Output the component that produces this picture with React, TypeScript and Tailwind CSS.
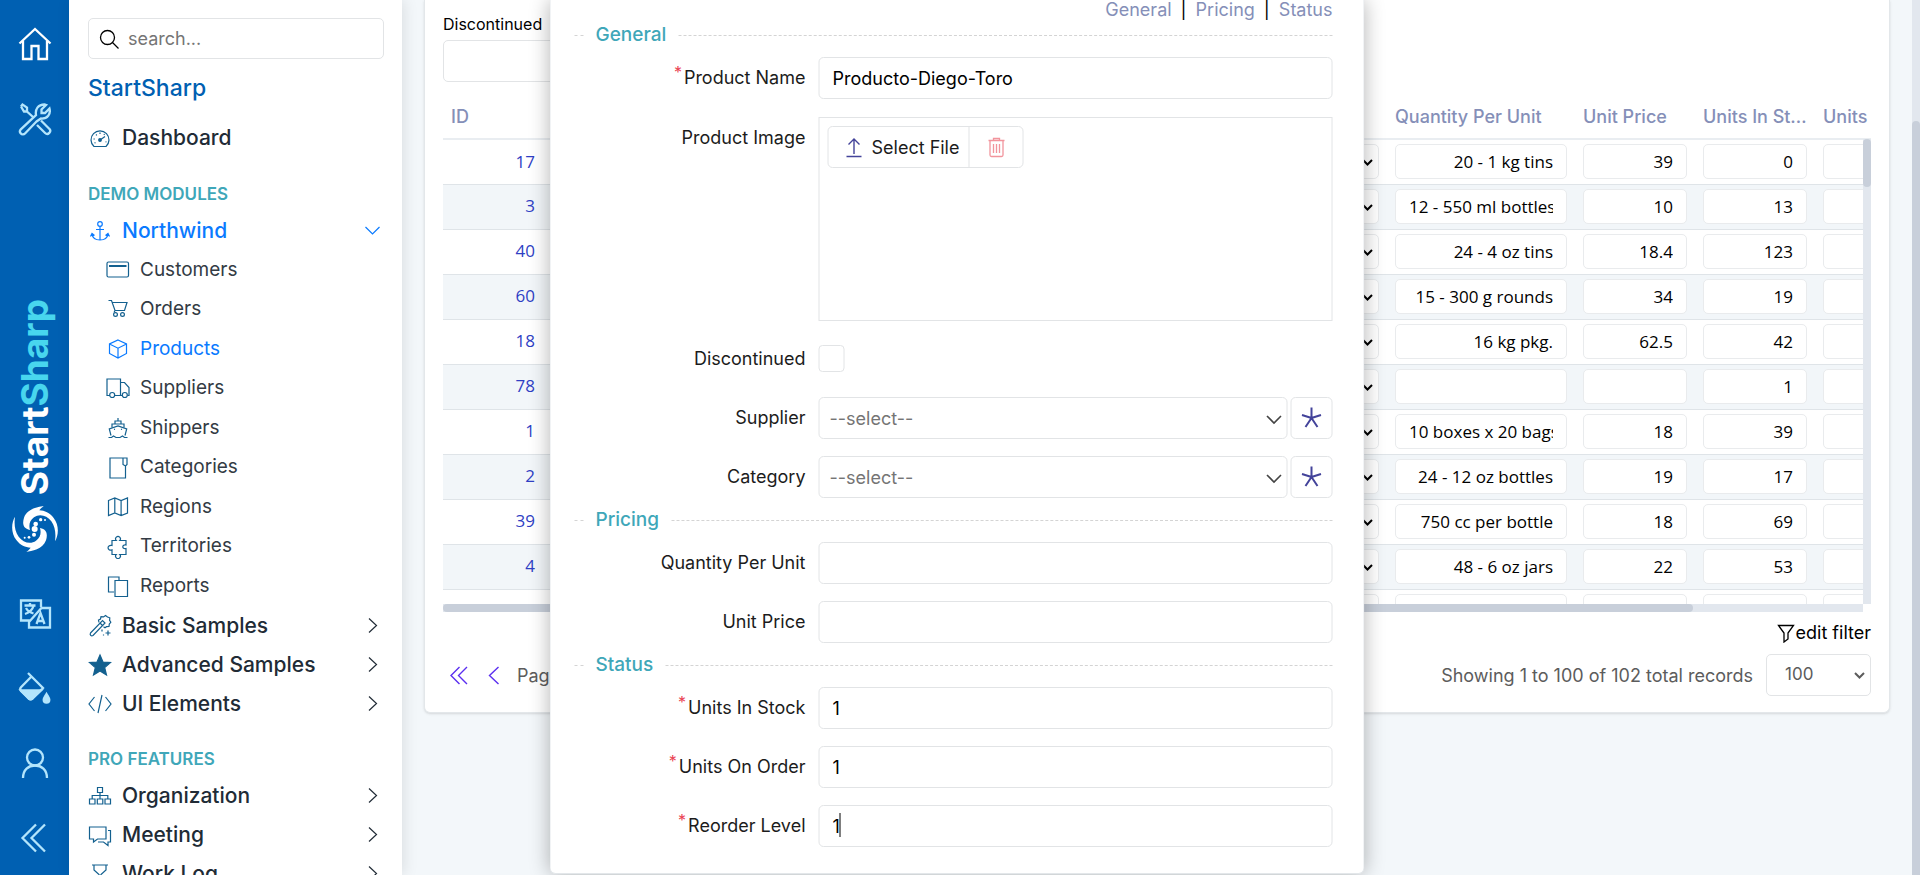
import { useId, type ReactNode } from "react";

const iconShapes: Record<string, ReactNode> = {
  home: (
    <>
      <path d="M1.500 16.500 17 2l15.500 14.500" />
      <path d="M5 14v18h8.500V19h7v13H29V14" />
    </>
  ),
  tools: (
    <>
      <path d="M3 4.500 4.500 2.500l4.500 3v4l6 5.500M3 4.500l3 5h3" />
      <path d="m18.500 19.500-11.500 12a2.900 2.900 0 0 1-4.200-.1 2.900 2.900 0 0 1 0-4L18 13c-1-5.500 2-10.500 8.500-10.500l1.500.5-4.500 4.500v3.500h3.500L31.500 6.500c1.500 5.500-2 10.500-8.500 10z" />
      <path d="m23 18.500 8.200 8.200a2.900 2.900 0 0 1-4.100 4.300L19 23" />
    </>
  ),
  translate: (
    <>
      <path d="M23 11V4.500H3v20h8v7h21V12h-8.500L11 26" />
      <path d="M6.500 9.500h11M12 7v2.500M15.500 10c-1 3.500-4 6.500-8.500 8M8 12c1.500 2.800 4 4.500 7.500 5.500" />
      <path d="m18.500 28 4-11 4 11M20.500 25h4" />
    </>
  ),
  bucket: (
    <>
      <path d="m10 2 15 15-10.500 10.500c-1.200 1-2.600 1-3.800 0L3 20c-1-1.200-1-2.600 0-3.800L13 6" />
      <path d="M3 19.500h20l-8.500 8c-1.200 1-2.600 1-3.800 0z" fill="currentColor" />
      <path d="M28.500 23c-1.800 3-2.800 4.200-2.800 5.800a2.800 2.800 0 0 0 5.600 0c0-1.600-1-2.800-2.800-5.800z" fill="currentColor" />
    </>
  ),
  user: (
    <>
      <circle cx="17" cy="11.500" r="8" />
      <path d="M5 32c0-8.500 5.500-12.500 12-12.500S29 23.500 29 32" />
    </>
  ),
  collapse: <path d="M18 3.500 4.500 17 18 30.500M27 3.500 13.500 17 27 30.500" />,
  search: (
    <>
      <circle cx="8.500" cy="8.500" r="7" />
      <path d="m13.500 13.500 6 6" />
    </>
  ),
  dashboard: (
    <>
      <path d="M6 20.500a9 9 0 1 1 12 0z" />
      <path d="m12 14 5-3.500" />
      <circle cx="12" cy="14" r="1.300" fill="currentColor" />
      <path d="M12 6.500V8M8 8.500l.8.8M5.500 13h1.300M6.500 17l1-.4M16.500 8l-.6.9M18.500 16l-1-.3" />
    </>
  ),
  anchor: (
    <>
      <circle cx="12" cy="5" r="2.300" />
      <path d="M12 7.500v13.500M8 10.500h8M4 15c.5 4 3.500 6 8 6s7.500-2 8-6M2.500 17.500l1.500-3 2.500 2M21.500 17.500l-1.500-3-2.500 2" />
    </>
  ),
  card: (
    <>
      <rect x="1" y="4" width="21.500" height="15" rx="1.500" />
      <path d="M3 8h17.500" strokeWidth="2" />
    </>
  ),
  cart: (
    <>
      <path d="M2.500 3.500h3l3.500 10h9.500l2.500-8H6.500M9 13.500l-1 2" />
      <circle cx="9.500" cy="17.500" r="1.900" />
      <circle cx="16.500" cy="17.500" r="1.900" />
    </>
  ),
  box: <path d="m12 3 8.500 4v9.500L12 21l-8.500-4.500V7zM3.500 7l8.500 4.200L20.500 7M12 11.200V21" />,
  truck: (
    <>
      <path d="M4 19.500H1V3h13.500v16.500H8.500M14.500 6.500h4l4.500 5v8h-1.500M14.500 19.500h1.500" />
      <circle cx="6.200" cy="19" r="2.500" />
      <circle cx="18.800" cy="19" r="2.500" />
    </>
  ),
  ship: (
    <>
      <path d="M12 2v3M9 8V5h6v3M6 11.500V8h12v3.500" />
      <path d="M5 19.500 3.300 13l8.700-3 8.700 3L19 19.500M8 13.500l1-.4M16 13.500l-1-.4" />
      <path d="M2.500 21.500h3l2-1.500 2.500 1.500h4l2.500-1.500 2 1.500h3" />
    </>
  ),
  book: <path d="M17 2H4v20h15.500V10M17 2h4v6.500L19.500 10 17 8.500z" />,
  map: <path d="m2.500 5.500 6.300-2.500 6.300 2.500L21.500 3v15l-6.400 2.500L8.800 18l-6.300 2.500zM8.800 3v15M15.100 5.500v15" />,
  puzzle: (
    <path d="M6 5.500h4.200a2.400 2.400 0 1 1 3.600 0H20V10c-4-1-4.500 4.500 0 3.500v6h-6.200a2.400 2.400 0 1 1-3.600 0H6v-4.600c-5 1.500-5.500-5.500 0-4.400z" />
  ),
  copy: (
    <>
      <path d="M8 18H2.500V3H13v3" />
      <path d="M9 6.500h12.500v16H9z" />
    </>
  ),
  wand: (
    <>
      <path d="m2.500 19 12-12.500L17 9 5 21.500c-1.800 1-3.500-.7-2.500-2.500zM12 9l2.500 2.500" />
      <path d="m11 8.500-.5-2.500 2-1 .5-2.300 2.500.2L17.500 1.500l2 1.500 2.300.8-.2 2.500 1.200 2-1.500 1.700-.3 2.500-2.500.2-1.500 1-1.500-1" />
      <path d="M20 16.500v5M17.500 19h5M14 15.500v2M15.500 20.500v1" />
    </>
  ),
  star: <path d="m12 2 3 7 7.500.6-5.800 5 1.800 7.400-6.500-4-6.500 4 1.800-7.400-5.800-5L9 9z" fill="currentColor" />,
  code: <path d="M6.500 5 1 12l5.500 7M17.500 5l5.500 7-5.500 7M14 3l-4 18" />,
  org: (
    <>
      <path d="M9.500 3.500h5v5h-5zM1.500 15h5.500v5H1.500zM9.300 15h5.500v5H9.300zM17 15h5.500v5H17z" />
      <path d="M12 8.500V15M4.200 15v-3.500h15.600V15" />
    </>
  ),
  chat: <path d="M1.500 4h16.500v12H9.500l-4 3v-3h-4zM20 7.500h2.500V19H20v3.500L15.500 19H10" />,
  hourglass: <path d="M4 3h16M6 3v5l5 4.500-5 4.500v5M18 3v5l-5 4.500 5 4.500v5M4 22h16" />,
  right: <path d="m8 4.500 7.500 7L8 18.500" />,
  down: <path d="m4.500 8 7 7 7-7" />,
  first: <path d="M10.500 2 2 10.500l8.500 8.500M18 2l-8.500 8.500L18 19" />,
  prev: <path d="m14.500 2-9 8.500 9 8.500" />,
  funnel: <path d="M1.500 1.500h15L11 9v6l-4 3V9z" />,
  upload: <path d="M10.500 17V2M5 7.500 10.500 2 16 7.500M3 19.500h15" />,
  trash: <path d="M3 4.500h16M8 4.500V2.500h6v2M4.500 4.500V19c0 1 .5 1.500 1.500 1.500h10c1 0 1.500-.5 1.500-1.500V4.500M8 8v9M11 8v9M14 8v9" />,
  asterisk: <path d="M12 12V1.500M12 12 2.500 9M12 12l9.500-3M12 12l-6 9M12 12l6 9" />,
  caret: <path d="m2 4 4.500 4.500L11 4" />,
};

function Icon({ name, box, weight, className }: { name: string; box: number; weight: number; className: string }) {
  return (
    <svg
      viewBox={`0 0 ${box} ${box}`}
      fill="none"
      stroke="currentColor"
      strokeWidth={weight}
      className={`shrink-0 ${className}`}
      aria-hidden="true"
    >
      {iconShapes[name]}
    </svg>
  );
}

function RailButton({ icon, label, tone }: { icon: string; label: string; tone: string }) {
  return (
    <button type="button" aria-label={label} className={`flex h-[75px] w-full shrink-0 items-center justify-center ${tone}`}>
      <Icon name={icon} box={34} weight={2.3} className="size-[34px]" />
    </button>
  );
}

function Swirl() {
  const arm =
    "M95 0C80 2 45 8 36 35C31 52 32 68 54 72C50 58 52 44 66 34C82 22 105 28 118 46C130 63 132 84 129 106C140 88 142 58 125 36C113 20 98 14 82 13C86 7 91 4 95 0Z";
  return (
    <svg viewBox="0 0 138 138" className="mt-[11px] size-[46px] shrink-0 text-white" fill="currentColor" aria-hidden="true">
      <path d={arm} />
      <path d={arm} transform="rotate(180 69 69)" />
      <circle cx="71" cy="54" r="7" />
      <circle cx="68" cy="69" r="9" />
      <circle cx="86" cy="41" r="5" />
      <circle cx="99" cy="42" r="3" />
      <circle cx="66" cy="86" r="6" />
      <circle cx="51" cy="94" r="4" />
      <circle cx="38" cy="95" r="3" />
    </svg>
  );
}

function Rail() {
  return (
    <nav aria-label="Quick access" className="flex w-[69px] shrink-0 flex-col items-center overflow-hidden bg-[#0060b2] pt-[6px]">
      <RailButton icon="home" label="Home" tone="text-white" />
      <RailButton icon="tools" label="Tools" tone="text-[#b3e5fc]" />
      <div className="flex flex-1 flex-col items-center justify-end pb-[23px]">
        <span className="rotate-180 text-[37px] leading-[44px] font-bold text-white [writing-mode:vertical-rl]">
          Start<span className="text-[#48d6ee]">Sharp</span>
        </span>
        <Swirl />
      </div>
      <RailButton icon="translate" label="Language" tone="text-[#b3e5fc]" />
      <RailButton icon="bucket" label="Theme" tone="text-[#b3e5fc]" />
      <RailButton icon="user" label="Account" tone="text-[#b3e5fc]" />
      <RailButton icon="collapse" label="Collapse sidebar" tone="text-[#b3e5fc]" />
    </nav>
  );
}

function Group({ icon, label, arrow, tone = "text-[#212b36]", iconTone = "text-[#13608f]" }: {
  icon: string;
  label: string;
  arrow?: "right" | "down";
  tone?: string;
  iconTone?: string;
}) {
  return (
    <a href="#" className={`flex h-[39px] shrink-0 items-center text-[21px] font-medium ${tone}`}>
      <span className={`flex w-[25px] justify-center ${iconTone}`}>
        <Icon name={icon} box={24} weight={1.2} className="size-6" />
      </span>
      <span className="ml-[10px] flex-1">{label}</span>
      {arrow && <Icon name={arrow} box={23} weight={1.2} className="size-[23px]" />}
    </a>
  );
}

const northwind = [
  { icon: "card", label: "Customers" },
  { icon: "cart", label: "Orders" },
  { icon: "box", label: "Products" },
  { icon: "truck", label: "Suppliers" },
  { icon: "ship", label: "Shippers" },
  { icon: "book", label: "Categories" },
  { icon: "map", label: "Regions" },
  { icon: "puzzle", label: "Territories" },
  { icon: "copy", label: "Reports" },
];

function Sidebar() {
  return (
    <aside className="z-10 flex w-[333px] shrink-0 flex-col overflow-hidden bg-white px-[18px] pt-[18px] shadow-[2px_0_14px_rgba(0,0,0,0.1)]">
      <label className="ml-px flex h-[41px] shrink-0 items-center rounded-[5px] border border-[#e2e4e6] pl-[10px]">
        <Icon name="search" box={20} weight={1.3} className="size-5 text-black" />
        <input
          type="search"
          aria-label="Search menu"
          placeholder="search..."
          className="ml-[9px] w-full bg-transparent text-[18px] outline-none placeholder:text-[#757575]"
        />
      </label>
      <h1 className="mt-[13px] ml-px text-[23px] leading-[32px] font-medium text-[#0060b2]">StartSharp</h1>
      <div className="mt-[14px]">
        <Group icon="dashboard" label="Dashboard" />
      </div>
      <h2 className="mt-[25px] ml-px text-[17px] leading-[24px] font-semibold text-[#3fa7b9]">DEMO MODULES</h2>
      <div className="mt-[5px]">
        <Group icon="anchor" label="Northwind" arrow="down" tone="text-[#0a7aff]" iconTone="text-[#0a7aff]" />
      </div>
      <ul className="grid h-[356px] shrink-0 auto-rows-fr">
        {northwind.map((item) => (
          <li key={item.label} className="flex">
            <a
              href="#"
              className={
                item.label === "Products"
                  ? "flex flex-1 items-center text-[19px] text-[#0a7aff]"
                  : "flex flex-1 items-center text-[19px] text-[#333b44]"
              }
            >
              <span
                className={
                  item.label === "Products"
                    ? "ml-[18px] flex w-[26px] justify-center"
                    : "ml-[18px] flex w-[26px] justify-center text-[#13608f]"
                }
              >
                <Icon name={item.icon} box={24} weight={1.2} className="size-6" />
              </span>
              <span className="ml-[9px]">{item.label}</span>
            </a>
          </li>
        ))}
      </ul>
      <Group icon="wand" label="Basic Samples" arrow="right" />
      <Group icon="star" label="Advanced Samples" arrow="right" />
      <Group icon="code" label="UI Elements" arrow="right" />
      <h2 className="mt-[24px] ml-px text-[17px] leading-[24px] font-semibold text-[#3fa7b9]">PRO FEATURES</h2>
      <div className="mt-[5px]">
        <Group icon="org" label="Organization" arrow="right" />
        <Group icon="chat" label="Meeting" arrow="right" />
        <Group icon="hourglass" label="Work Log" arrow="right" />
      </div>
    </aside>
  );
}

const products = [
  { id: "17", quantity: "20 - 1 kg tins", price: "39", stock: "0" },
  { id: "3", quantity: "12 - 550 ml bottles", price: "10", stock: "13" },
  { id: "40", quantity: "24 - 4 oz tins", price: "18.4", stock: "123" },
  { id: "60", quantity: "15 - 300 g rounds", price: "34", stock: "19" },
  { id: "18", quantity: "16 kg pkg.", price: "62.5", stock: "42" },
  { id: "78", quantity: "", price: "", stock: "1" },
  { id: "1", quantity: "10 boxes x 20 bags", price: "18", stock: "39" },
  { id: "2", quantity: "24 - 12 oz bottles", price: "19", stock: "17" },
  { id: "39", quantity: "750 cc per bottle", price: "18", stock: "69" },
  { id: "4", quantity: "48 - 6 oz jars", price: "22", stock: "53" },
  { id: "", quantity: "", price: "", stock: "" },
];

function CellInput({ value, label }: { value: string; label: string }) {
  return (
    <input
      aria-label={label}
      defaultValue={value}
      className="block h-[35px] w-full rounded-[5px] border border-[#e9ebed] bg-white px-[13px] text-right font-['Open_Sans',sans-serif] text-[17px] text-black outline-none"
    />
  );
}

function ProductTable() {
  const head = "truncate px-2 text-left font-medium";
  const cell = "h-[45px] border-b border-[#dfe4e8] px-2 pb-[1px]";
  return (
    <div className="mt-[12px] grid grid-cols-[1fr_8px] grid-rows-[510px_8px]">
      <div className="col-span-2 col-start-1 row-start-1 overflow-hidden">
        <table className="w-[1552px] table-fixed border-collapse">
          <colgroup>
            <col className="w-[100px]" />
            <col className="w-[644px]" />
            <col className="w-[200px]" />
            <col className="w-[188px]" />
            <col className="w-[120px]" />
            <col className="w-[120px]" />
            <col className="w-[180px]" />
          </colgroup>
          <thead>
            <tr className="h-[45px] border-b-2 border-[#e9edf1] text-[18px] text-[#858fb8]">
              <th className={head}>ID</th>
              <th aria-hidden="true" />
              <th aria-hidden="true" />
              <th className={head}>Quantity Per Unit</th>
              <th className={head}>Unit Price</th>
              <th className={head}>Units In Stock</th>
              <th className="px-2 text-left font-medium">Units</th>
            </tr>
          </thead>
          <tbody>
            {products.map((row, index) => (
              <tr key={index} className="odd:bg-white even:bg-[#f2f6f9]">
                <td className={`${cell} text-right font-['Open_Sans',sans-serif] text-[17px]`}>
                  <a href="#" className="text-[#2f3fc4]">{row.id}</a>
                </td>
                <td className={cell} />
                <td className={cell}>
                  <div className="relative">
                    <select aria-label="Category" className="block h-[35px] w-full appearance-none rounded-[5px] border border-[#e9ebed] bg-white" />
                    <Icon name="caret" box={13} weight={2} className="pointer-events-none absolute top-[12px] right-[5px] size-[13px] text-black" />
                  </div>
                </td>
                <td className={cell}>
                  <CellInput label="Quantity Per Unit" value={row.quantity} />
                </td>
                <td className={cell}>
                  <CellInput label="Unit Price" value={row.price} />
                </td>
                <td className={cell}>
                  <CellInput label="Units In Stock" value={row.stock} />
                </td>
                <td className={cell}>
                  <CellInput label="Units On Order" value="" />
                </td>
              </tr>
            ))}
          </tbody>
        </table>
      </div>
      <div className="z-[1] col-start-2 row-start-1 mt-[45px] bg-[#e2e7ee]">
        <div className="h-12 rounded bg-[#c8cfda]" />
      </div>
      <div className="col-start-1 row-start-2 bg-[#e2e7ee]">
        <div className="h-2 w-[88%] rounded bg-[#c8cfda]" />
      </div>
    </div>
  );
}

function GridCard() {
  return (
    <section className="rounded-b-[6px] border border-t-0 border-[#e3e7ea] bg-white px-[18px] pt-[12px] pb-[16px] shadow-sm">
      <label className="flex w-[240px] flex-col text-[16px] leading-6 text-black">
        Discontinued
        <select className="mt-1 h-[42px] appearance-none rounded-[5px] border border-[#e2e4e6] bg-white" />
      </label>
      <ProductTable />
      <div className="mt-[9px] flex justify-end">
        <a href="#" className="flex items-center text-[18px] leading-6 text-black">
          <Icon name="funnel" box={19} weight={1.3} className="size-[19px]" />
          edit filter
        </a>
      </div>
      <div className="mt-[9px] flex h-[42px] items-center text-[18px] text-[#5c5c5c]">
        <button type="button" aria-label="First page" className="ml-[6px] text-[#5b2ff0]">
          <Icon name="first" box={21} weight={1.4} className="size-[21px]" />
        </button>
        <button type="button" aria-label="Previous page" className="ml-[14px] text-[#5b2ff0]">
          <Icon name="prev" box={21} weight={1.4} className="size-[21px]" />
        </button>
        <span className="ml-[12px]">Page</span>
        <span className="mr-[13px] ml-auto">Showing 1 to 100 of 102 total records</span>
        <div className="relative">
          <select aria-label="Page size" className="h-[42px] w-[105px] appearance-none rounded-[5px] border border-[#e2e4e6] bg-white pl-[18px] text-[17px]">
            <option>100</option>
          </select>
          <Icon name="caret" box={13} weight={2} className="pointer-events-none absolute top-[15px] right-[5px] size-[13px]" />
        </div>
      </div>
    </section>
  );
}

function SectionTitle({ children, size = "h-[44px]" }: { children: ReactNode; size?: string }) {
  return (
    <div className={`flex items-center ${size}`}>
      <span className="w-[9px] border-t border-dashed border-[#d4d4d4]" />
      <h3 className="mx-[12px] text-[19px] leading-6 font-medium text-[#3fa7b9]">{children}</h3>
      <span className="flex-1 border-t border-dashed border-[#d4d4d4]" />
    </div>
  );
}

function Label({ id, children, required }: { id: string; children: ReactNode; required?: boolean }) {
  return (
    <label htmlFor={id} className="flex h-[40px] w-[231px] shrink-0 items-center justify-end text-[18px] text-[#1c1c1c]">
      {required && <span className="mr-[2px] mb-[10px] text-[16px] text-[#ea4353]">*</span>}
      {children}
    </label>
  );
}

const control = "h-[42px] w-full rounded-[5px] border border-[#e2e4e6] bg-white outline-none";

function TextField({ label, value = "", required, caret }: { label: string; value?: string; required?: boolean; caret?: boolean }) {
  const id = useId();
  return (
    <div className="flex gap-[13px]">
      <Label id={id} required={required}>{label}</Label>
      <div className="relative flex-1">
        <input id={id} defaultValue={value} className={`${control} px-[13px] text-[18px] text-black`} />
        {caret && <span className="absolute top-[8px] left-[21px] h-6 w-px bg-black" />}
      </div>
    </div>
  );
}

function LookupField({ label }: { label: string }) {
  const id = useId();
  return (
    <div className="flex gap-[13px]">
      <Label id={id}>{label}</Label>
      <div className="flex flex-1 gap-[3px]">
        <div className="relative flex-1">
          <select id={id} className={`${control} appearance-none pl-[10px] text-[18px] text-[#757575]`}>
            <option>--select--</option>
          </select>
          <Icon name="down" box={23} weight={1.6} className="pointer-events-none absolute top-[11px] right-[2px] size-[23px] text-[#444]" />
        </div>
        <button type="button" aria-label={`New ${label}`} className="flex size-[42px] items-center justify-center rounded-[5px] border border-[#e2e4e6] text-[#43439a]">
          <Icon name="asterisk" box={24} weight={2} className="size-6" />
        </button>
      </div>
    </div>
  );
}

function ProductDialog() {
  return (
    <div
      role="dialog"
      aria-label="Edit Product"
      className="absolute top-0 left-1/2 z-20 w-[815px] -translate-x-1/2 rounded-b-[6px] border border-t-0 border-[#e3e7ea] bg-white pr-[31px] pb-[26px] pl-[24px] shadow-[0_0_20px_rgba(0,0,0,0.28)]"
    >
      <div className="flex h-[20px] items-center justify-end gap-[9px] text-[18px] leading-[20px] text-[#858fb8]">
        <a href="#">General</a>
        <span className="text-black">|</span>
        <a href="#">Pricing</a>
        <span className="text-black">|</span>
        <a href="#">Status</a>
      </div>
      <SectionTitle size="h-[37px] pb-[7px]">General</SectionTitle>
      <div className="flex flex-col gap-[17px]">
        <TextField label="Product Name" value="Producto-Diego-Toro" required />
        <div className="flex gap-[13px] pt-px">
          <Label id="product-image">Product Image</Label>
          <div className="h-[204px] flex-1 border border-[#e2e4e6] p-[8px]">
            <div className="flex h-[42px] w-[196px] rounded-[5px] border border-[#e2e4e6]">
              <button id="product-image" type="button" className="flex flex-1 items-center gap-[7px] border-r border-[#e2e4e6] pl-[15px] text-[18px] text-[#1c1c1c]">
                <Icon name="upload" box={21} weight={1.4} className="size-[21px] text-[#43439a]" />
                Select File
              </button>
              <button type="button" aria-label="Remove file" className="flex w-[53px] items-center justify-center text-[#f2949c]">
                <Icon name="trash" box={22} weight={1.3} className="size-[22px]" />
              </button>
            </div>
          </div>
        </div>
        <div className="flex h-[42px] items-center gap-[13px] pb-[2px]">
          <Label id="discontinued">Discontinued</Label>
          <input id="discontinued" type="checkbox" className="h-[27px] w-[26px] appearance-none rounded-[4px] border border-[#e2e4e6] bg-white" />
        </div>
        <LookupField label="Supplier" />
        <LookupField label="Category" />
      </div>
      <SectionTitle>Pricing</SectionTitle>
      <div className="flex flex-col gap-[17px]">
        <TextField label="Quantity Per Unit" />
        <TextField label="Unit Price" />
      </div>
      <SectionTitle>Status</SectionTitle>
      <div className="flex flex-col gap-[17px]">
        <TextField label="Units In Stock" value="1" required />
        <TextField label="Units On Order" value="1" required />
        <TextField label="Reorder Level" value="1" required caret />
      </div>
    </div>
  );
}

export default function App() {
  return (
    <div className="relative flex h-screen overflow-hidden bg-[#f3f7fa] font-[Inter,sans-serif]">
      <Rail />
      <Sidebar />
      <main className="min-w-0 flex-1 px-[22px]">
        <GridCard />
      </main>
      <div className="w-2 shrink-0 bg-[#e2e7ee] pt-[121px]">
        <div className="h-full rounded-t bg-[#c8cfda]" />
      </div>
      <div className="pointer-events-none absolute inset-y-0 right-1.5 left-0">
        <ProductDialog />
      </div>
    </div>
  );
}
